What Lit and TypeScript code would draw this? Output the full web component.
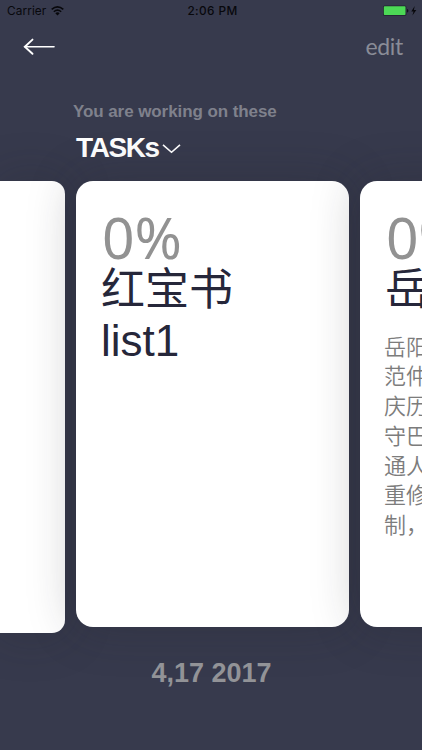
import { LitElement, html, css, nothing } from "lit";
import { customElement, property } from "lit/decorators.js";

@customElement("task-card")
class TaskCard extends LitElement {
  @property() percent = "";
  @property() name = "";
  @property() sub = "";
  @property({ attribute: false }) lines: string[] = [];

  static styles = css`
    :host {
      display: block;
      box-sizing: border-box;
      flex: none;
      overflow: hidden;
      white-space: nowrap;
      padding: 28px 0 0 25px;
      background: #fff;
    }
    .percent {
      height: 54px;
      padding-left: 1px;
      font: 400 57px/57px "Noto Sans", sans-serif;
      color: #929292;
    }
    .name {
      height: 51px;
      font: 400 44px/46px "Noto Sans CJK SC", sans-serif;
      color: #26273a;
    }
    .sub {
      height: 54px;
      font: 400 44px/54px "Liberation Sans", sans-serif;
      color: #26273a;
    }
    .body {
      margin-left: -1px;
      padding-top: 17px;
      font: 350 22px/29.8px "Noto Sans CJK SC", sans-serif;
      color: #7c7c7c;
    }
  `;

  render() {
    return html`
      ${this.percent ? html`<div class="percent">${this.percent}</div>` : nothing}
      ${this.name ? html`<div class="name">${this.name}</div>` : nothing}
      ${this.sub ? html`<div class="sub">${this.sub}</div>` : nothing}
      ${this.lines.length
        ? html`<div class="body">${this.lines.map((l) => html`<div>${l}</div>`)}</div>`
        : nothing}
    `;
  }
}

@customElement("app-root")
class AppRoot extends LitElement {
  static styles = css`
    :host {
      display: flex;
      flex-direction: column;
      box-sizing: border-box;
      width: 422px;
      height: 750px;
      overflow: hidden;
      background: #373a4d;
      font-family: "Liberation Sans", sans-serif;
    }
    .status {
      display: grid;
      grid-template-columns: 1fr auto 1fr;
      align-items: center;
      height: 22px;
      padding: 0 5px 0 7px;
      color: #08080c;
      font: 400 11.8px/22px Inter, sans-serif;
    }
    .left {
      display: flex;
      align-items: center;
      gap: 5px;
      letter-spacing: 0.1px;
    }
    .time {
      padding-left: 1px;
      font-weight: 500;
      letter-spacing: 0.4px;
    }
    .right {
      display: flex;
      justify-content: flex-end;
    }
    svg {
      display: block;
      flex: none;
    }
    .nav {
      display: flex;
      justify-content: space-between;
      align-items: center;
      height: 50px;
      padding: 0 19px 0 23px;
    }
    .edit {
      margin-top: -2px;
      font: 400 23px/28px Lato, sans-serif;
      color: #8a8c97;
      letter-spacing: -0.3px;
    }
    .heading {
      height: 109px;
      box-sizing: border-box;
      padding: 29px 0 0 73px;
    }
    .hint {
      font-size: 17px;
      line-height: 22px;
      font-weight: 700;
      letter-spacing: -0.08px;
      color: #7f818c;
    }
    .tasks {
      display: flex;
      align-items: center;
      gap: 3px;
      margin-top: 7px;
      padding-left: 3px;
      height: 36px;
      font-size: 28px;
      line-height: 36px;
      font-weight: 700;
      letter-spacing: -1.4px;
      color: #fff;
    }
    .cards {
      display: flex;
      align-items: flex-start;
      height: 452px;
    }
    .prev,
    .current,
    .next {
      box-shadow: 0 0 48px rgba(32, 33, 42, 0.27);
    }
    .prev {
      width: 64.5px;
      height: 452px;
      border-radius: 0 13px 13px 0;
    }
    .current {
      width: 273px;
      height: 446px;
      margin: -0.5px 11px 0 11.5px;
      border-radius: 17px;
    }
    .next {
      width: 273px;
      height: 446px;
      margin-top: -0.5px;
      border-radius: 17px;
    }
    .date {
      position: relative;
      height: 36px;
      margin-top: 22px;
      padding-left: 1px;
      text-align: center;
      font-size: 27px;
      line-height: 36px;
      font-weight: 700;
      color: #929397;
    }
  `;

  private excerpt = ["岳阳", "范仲", "庆历", "守巴", "通人", "重修", "制，"];

  render() {
    return html`
      <div class="status">
        <div class="left">
          <span>Carrier</span>
          <svg width="13" height="10" viewBox="0 0 13 10" fill="none" stroke="#08080c">
            <path d="M.7 3.4Q6.5-1.5 12.3 3.4" stroke-width="1.7" />
            <path d="M2.8 5.7Q6.5 2.6 10.2 5.7" stroke-width="1.5" />
            <path d="M4.3 7.2Q6.5 5.4 8.7 7.2L6.5 9.5Z" fill="#08080c" stroke="none" />
          </svg>
        </div>
        <span class="time">2:06 PM</span>
        <div class="right">
          <svg width="34" height="12" viewBox="0 0 34 12">
            <rect x="0" y=".6" width="23.4" height="10.2" rx="1.5" fill="#20232f" />
            <rect x=".8" y="1.3" width="21.7" height="8.8" rx=".8" fill="#4cd956" />
            <path d="M24 4q1.4 0 1.4 1.8T24 7.6Z" fill="#111219" />
            <path d="M31.7.9 28.3 6.4h2.2l-1.1 4.2 3.9-5.5h-2.4Z" fill="#08080c" />
          </svg>
        </div>
      </div>
      <div class="nav">
        <svg width="33" height="18" viewBox="0 0 33 18" fill="none" stroke="#fff" stroke-linecap="round">
          <path d="M2 8.7H31" stroke-width="1.6" />
          <path d="M9.5 1.6 1.8 8.7 9.5 15.8" stroke-width="1.9" />
        </svg>
        <span class="edit">edit</span>
      </div>
      <div class="heading">
        <div class="hint">You are working on these</div>
        <div class="tasks">
          <span>TASKs</span>
          <svg width="19" height="12" viewBox="0 0 19 12" fill="none" stroke="#fff" stroke-width="1.6">
            <path d="M1 2.8 9.5 10.3 18 2.8" />
          </svg>
        </div>
      </div>
      <div class="cards">
        <task-card class="prev"></task-card>
        <task-card class="current" percent="0%" name="红宝书" sub="list1"></task-card>
        <task-card class="next" percent="0%" name="岳" .lines=${this.excerpt}></task-card>
      </div>
      <div class="date">4,17 2017</div>
    `;
  }
}
